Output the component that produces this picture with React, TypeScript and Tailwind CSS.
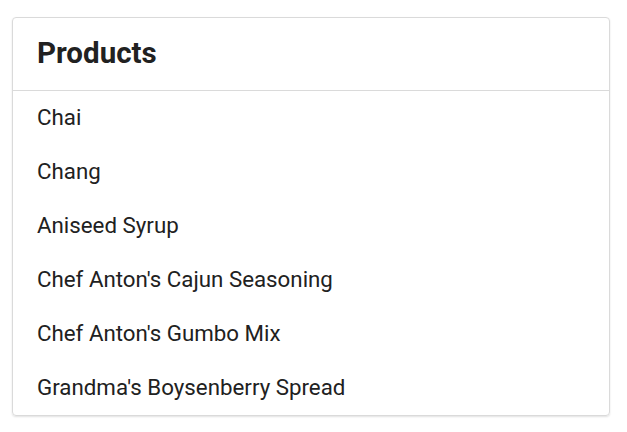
const products = [
  'Chai',
  'Chang',
  'Aniseed Syrup',
  "Chef Anton's Cajun Seasoning",
  "Chef Anton's Gumbo Mix",
  "Grandma's Boysenberry Spread",
]

export default function App() {
  return (
    <div className="min-h-screen bg-white pt-[17px] pl-[12px] pr-[17px] font-['Roboto',sans-serif] text-[#212121]">
      <div className="w-[598px] rounded-[4px] border border-[#dadada] shadow-[0_1px_2px_rgba(0,0,0,0.12)]">
        {/* header */}
        <div className="h-[73px] flex items-center px-[24px] border-b border-[#dadada]">
          <h2 className="text-[29.5px] font-bold leading-none">Products</h2>
        </div>
        <ul>
          {products.map((p) => (
            <li key={p} className="h-[54px] flex items-center px-[24px] pb-[1px] text-[22.3px]">
              {p}
            </li>
          ))}
        </ul>
      </div>
    </div>
  )
}
